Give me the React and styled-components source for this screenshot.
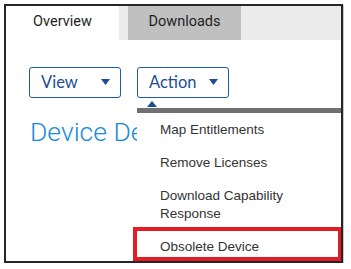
import React from "react";
import styled, { createGlobalStyle } from "styled-components";

const GlobalStyle = createGlobalStyle`
  html, body { margin: 0; padding: 0; background: #ffffff; }
  * { box-sizing: border-box; }
`;

const Frame = styled.div`
  position: relative;
  margin: 4px 0 0 4px;
  width: 339px;
  height: 259px;
  border: 2px solid #262626;
  box-shadow: 1px 1px 0 #c8c8c8;
  background: #ffffff;
  overflow: hidden;
`;

const TabBar = styled.div`
  display: flex;
  gap: 9px;
  height: 34px;
  background: #ebebeb;
`;

const Tab = styled.div`
  width: 113px;
  display: flex;
  align-items: center;
  justify-content: center;
  padding-bottom: 4px;
  background: ${(p) => (p.$active ? "#ffffff" : "#c0c0c0")};
  font-family: Roboto, "Noto Sans", sans-serif;
  font-size: 14.5px;
  color: #1e1e1e;
`;

const Content = styled.div`
  padding: 27px 0 0 23px;
`;

const ButtonRow = styled.div`
  display: flex;
  gap: 16px;
`;

const DropButton = styled.div`
  width: ${(p) => p.$w}px;
  height: 31px;
  border: 1px solid #1a5ca8;
  border-radius: 3px;
  display: flex;
  align-items: center;
  justify-content: space-between;
  padding: 0 10px 1px 11px;
  font-family: Lato, "Open Sans", sans-serif;
  font-size: 16.5px;
  color: #1d4e8f;
`;

const Caret = () => (
  <svg width="9" height="6" viewBox="0 0 9 6">
    <polygon points="0,0 9,0 4.5,6" fill="#1d4e8f" />
  </svg>
);

const Heading = styled.h1`
  margin: 18px 0 0 1px;
  font-family: Roboto, "Noto Sans", sans-serif;
  font-weight: 300;
  font-size: 26.5px;
  line-height: 32px;
  color: #1a8bd6;
  white-space: nowrap;
`;

const Menu = styled.div`
  position: absolute;
  left: 131px;
  right: 0;
  top: 95px;
`;

const MenuPointer = styled.div`
  margin-left: 10px;
  width: 0;
  height: 0;
  border-left: 5px solid transparent;
  border-right: 5px solid transparent;
  border-bottom: 6px solid #1d4e8f;
  margin-bottom: 1px;
`;

const MenuList = styled.div`
  background: #ffffff;
  border-top: 5px solid #707070;
  padding-bottom: 10px;
`;

const MenuItem = styled.div`
  padding: 8px 0 7px 23px;
  font-family: "Liberation Sans", Arial, sans-serif;
  font-size: 13.5px;
  line-height: 18px;
  color: #333333;
`;

const Highlight = styled.div`
  position: absolute;
  left: 127px;
  top: 221px;
  width: 209px;
  height: 34px;
  border: 4px solid #e31d25;
`;

export default function App() {
  return (
    <>
      <GlobalStyle />
      <Frame>
        <TabBar>
          <Tab $active>Overview</Tab>
          <Tab>Downloads</Tab>
        </TabBar>
        <Content>
          <ButtonRow>
            <DropButton $w={92}>
              View <Caret />
            </DropButton>
            <DropButton $w={92}>
              Action <Caret />
            </DropButton>
          </ButtonRow>
          <Heading>Device Details</Heading>
        </Content>
        <Menu>
          <MenuPointer />
          <MenuList>
            <MenuItem>Map Entitlements</MenuItem>
            <MenuItem>Remove Licenses</MenuItem>
            <MenuItem>
              Download Capability
              <br />
              Response
            </MenuItem>
            <MenuItem>Obsolete Device</MenuItem>
          </MenuList>
        </Menu>
        <Highlight />
      </Frame>
    </>
  );
}
